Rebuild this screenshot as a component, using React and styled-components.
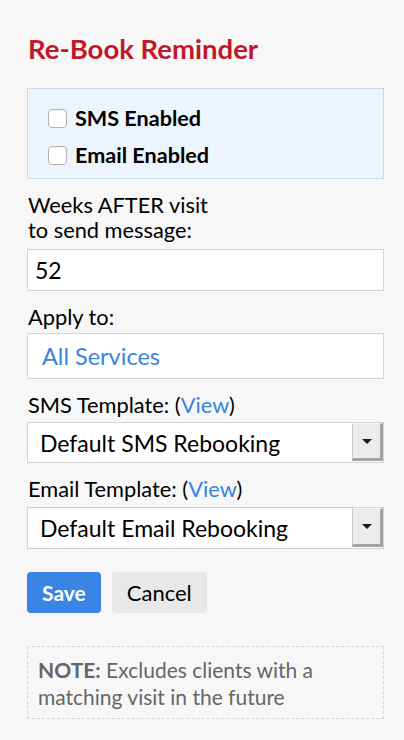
import React from 'react'
import styled, { createGlobalStyle } from 'styled-components'

const Global = createGlobalStyle`
  html, body {
    margin: 0;
    padding: 0;
    background: #f7f7f7;
    font-family: Lato, "Liberation Sans", sans-serif;
    color: #111;
  }
  * { box-sizing: border-box; }
`

const Panel = styled.div`
  width: 404px;
  min-height: 740px;
  padding: 33px 20px 0 27px;
  display: flex;
  flex-direction: column;
`

const Title = styled.h2`
  margin: 0 0 23px 1px;
  font-size: 27.5px;
  font-weight: 700;
  color: #c2172b;
  line-height: 32px;
`

const ToggleBox = styled.div`
  background: #edf5fc;
  border: 1px solid #c3daee;
  padding: 15px 20px 9px 20px;
  display: flex;
  flex-direction: column;
  gap: 9px;
  margin-bottom: 13px;
`

const CheckRow = styled.label`
  display: flex;
  align-items: center;
  gap: 8px;
  font-size: 21.6px;
  font-weight: 700;
  line-height: 28px;
  color: #000;
`

const Box = styled.span`
  width: 19px;
  height: 19px;
  border: 1px solid #b3b3b3;
  border-radius: 4px;
  background: #fff;
  box-shadow: inset 0 1px 1px rgba(0, 0, 0, 0.06);
`

const Label = styled.div`
  font-size: 21.8px;
  line-height: 25px;
  margin: 0 0 ${p => p.$mb || 5}px 1px;
  color: #000;
`

const Link = styled.span`
  color: #3a83de;
`

const Field = styled.div`
  height: ${p => p.$h || 42}px;
  background: #fff;
  border: 1px solid #d4d4d4;
  display: flex;
  align-items: center;
  padding-left: ${p => (p.$link ? 14 : 7)}px;
  font-size: ${p => (p.$link ? 23.5 : 23)}px;
  color: ${p => (p.$link ? '#3a83de' : '#000')};
  margin-bottom: 13px;
`

const Select = styled.div`
  height: ${p => p.$h || 42}px;
  background: #fff;
  border: 1px solid #d4d4d4;
  display: flex;
  align-items: stretch;
  font-size: 23px;
  color: #000;
  margin-bottom: 13px;
`

const SelectText = styled.div`
  flex: 1;
  display: flex;
  align-items: center;
  padding-left: 12px;
`

const Arrow = styled.div`
  width: 31px;
  margin-bottom: 1px;
  background: #ececec;
  border-left: 1px solid #c9c9c9;
  border-top: 1px solid #f6f6f6;
  border-right: 3px solid #a3a3a3;
  border-bottom: 3px solid #a3a3a3;
  display: flex;
  align-items: center;
  justify-content: center;

  &::after {
    content: '';
    margin-left: 1px;
    border-left: 5px solid transparent;
    border-right: 5px solid transparent;
    border-top: 5px solid #1a1a1a;
  }
`

const Actions = styled.div`
  display: flex;
  gap: 11px;
  margin-top: 10px;
  margin-bottom: 33px;
`

const Button = styled.button`
  height: 41px;
  padding: 0 15px;
  border: none;
  border-radius: 4px;
  font-family: inherit;
  font-size: ${p => (p.$primary ? 21 : 22)}px;
  font-weight: ${p => (p.$primary ? 700 : 400)};
  background: ${p => (p.$primary ? '#3a84e4' : '#e8e8e8')};
  color: ${p => (p.$primary ? '#fff' : '#000')};
`

const Note = styled.div`
  border: 1px dashed #d6d6d6;
  padding: 9px 10px 8px 10px;
  font-size: 21px;
  line-height: 27px;
  color: #666;
`

const App = () => {
  return (
    <Panel>
      <Global />
      <Title>Re-Book Reminder</Title>
      <ToggleBox>
        <CheckRow><Box />SMS Enabled</CheckRow>
        <CheckRow><Box />Email Enabled</CheckRow>
      </ToggleBox>
      <Label $mb={7}>Weeks AFTER visit<br />to send message:</Label>
      <Field>52</Field>
      <Label $mb={4}>Apply to:</Label>
      <Field $h={46} $link>All Services</Field>
      <Label>SMS Template: (<Link>View</Link>)</Label>
      <Select $h={41}>
        <SelectText>Default SMS Rebooking</SelectText>
        <Arrow />
      </Select>
      <Label $mb={6}>Email Template: (<Link>View</Link>)</Label>
      <Select>
        <SelectText>Default Email Rebooking</SelectText>
        <Arrow />
      </Select>
      <Actions>
        <Button $primary>Save</Button>
        <Button>Cancel</Button>
      </Actions>
      <Note><b>NOTE:</b> Excludes clients with a matching visit in the future</Note>
    </Panel>
  )
}

export default App
